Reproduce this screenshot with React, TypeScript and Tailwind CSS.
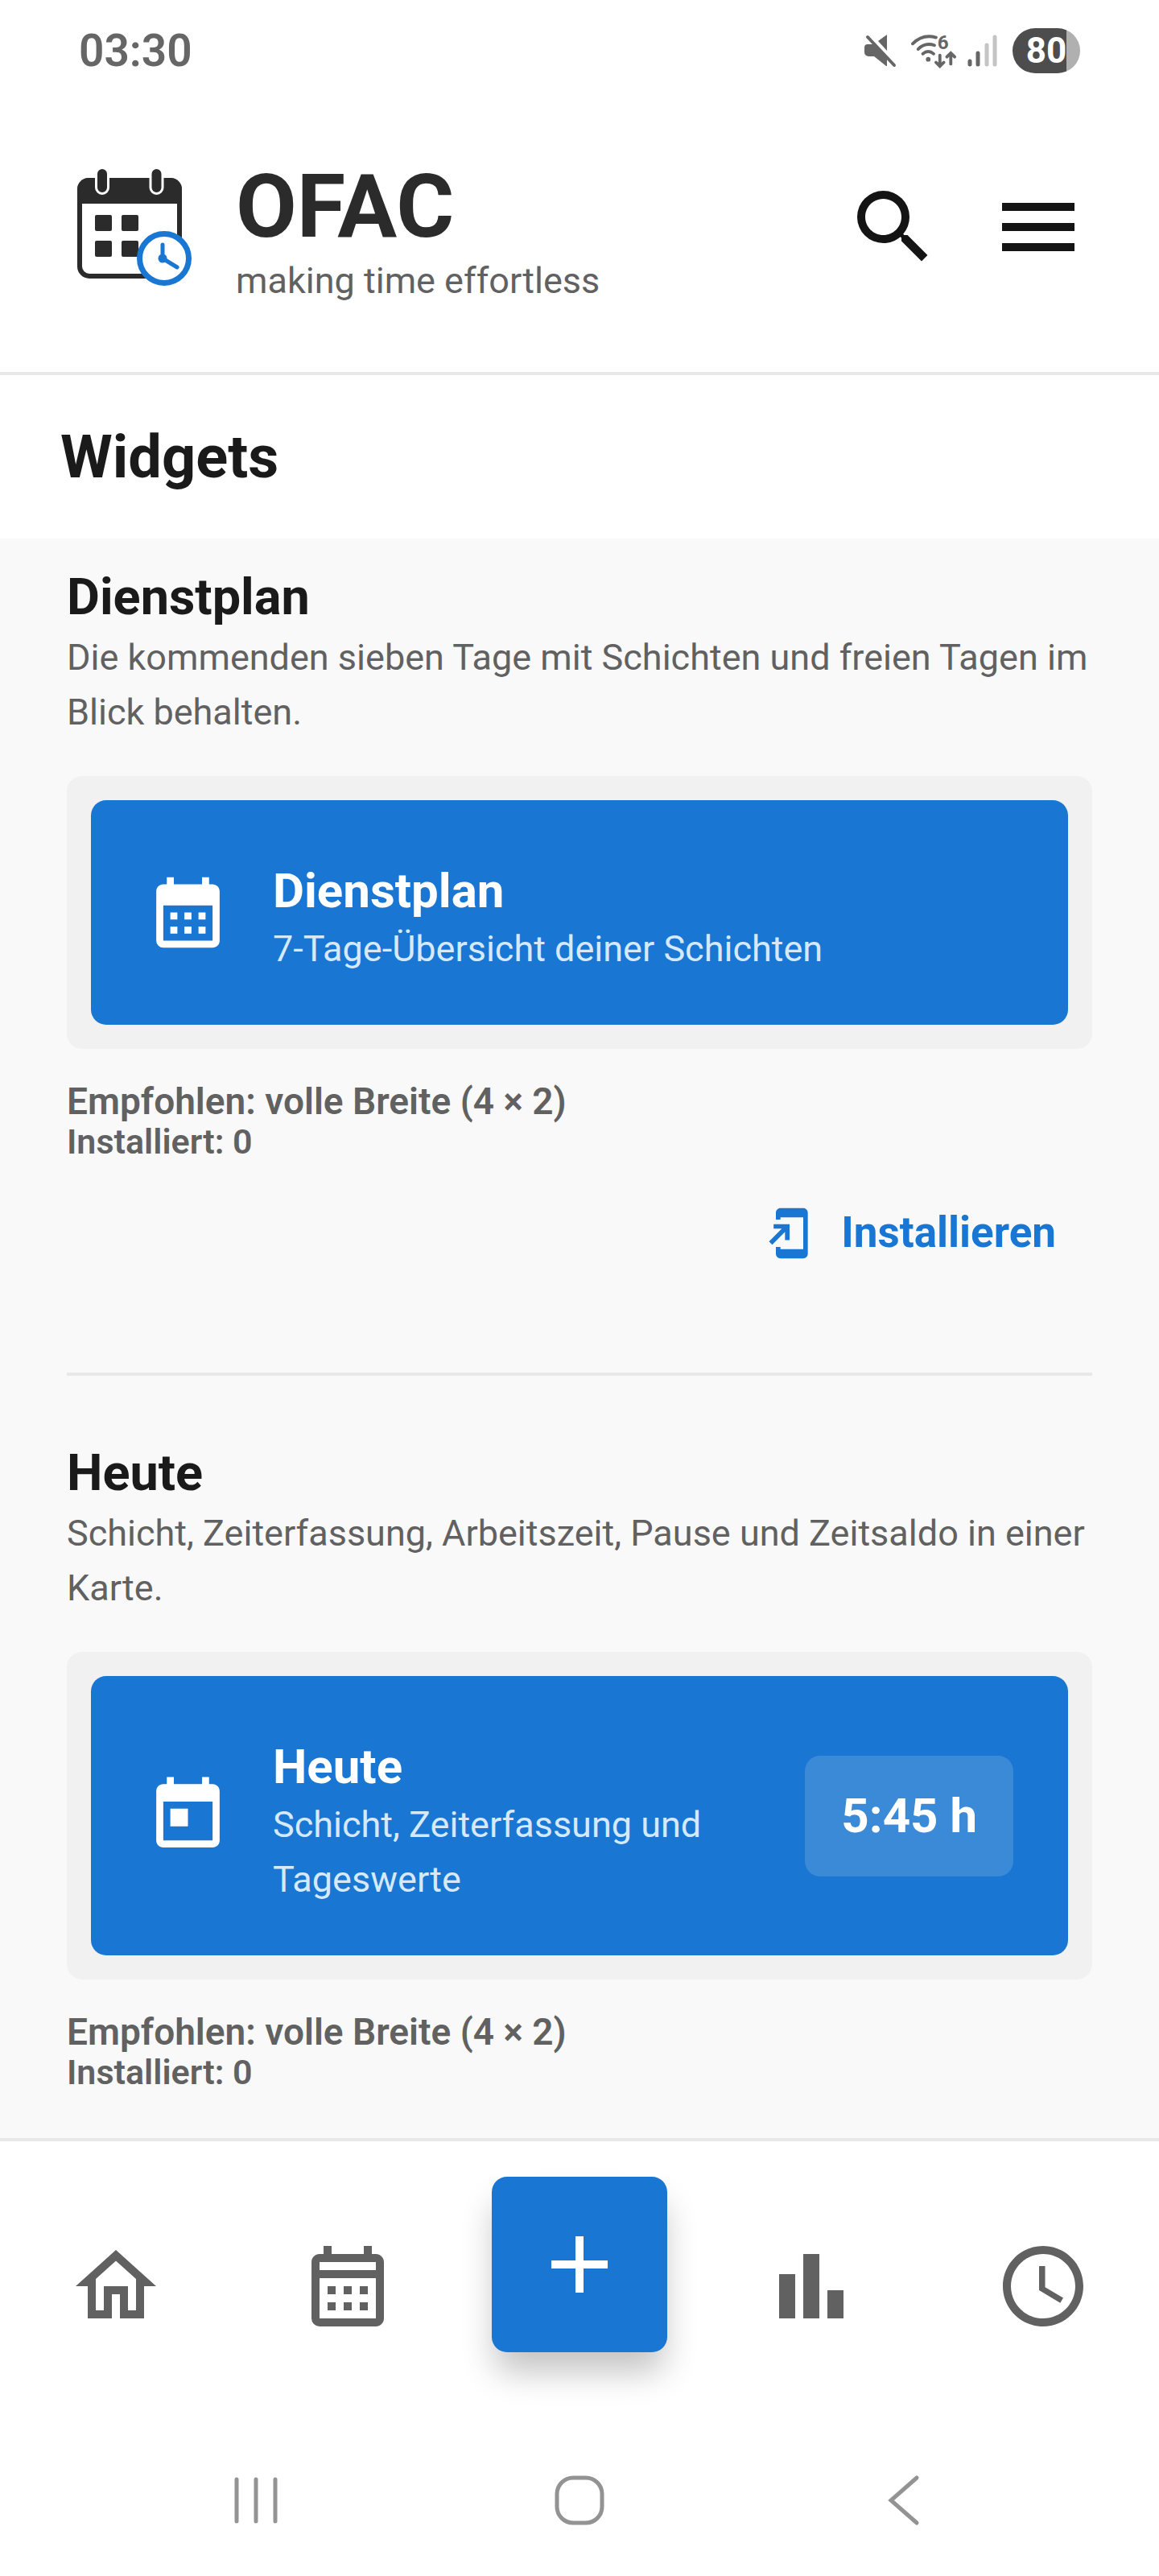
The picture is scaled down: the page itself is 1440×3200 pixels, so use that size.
import type { ReactNode } from "react";

const icons = {
  search:
    "M15.5 14h-.79l-.28-.27A6.471 6.471 0 0 0 16 9.5 6.5 6.5 0 1 0 9.5 16c1.61 0 3.09-.59 4.23-1.57l.27.28v.79l5 4.99L20.49 19l-4.99-5zm-6 0C7.01 14 5 11.99 5 9.5S7.01 5 9.5 5 14 7.01 14 9.5 11.99 14 9.5 14z",
  menu: "M3 18h18v-2H3v2zm0-5h18v-2H3v2zm0-7v2h18V6H3z",
  schedule:
    "M19 4h-1V2h-2v2H8V2H6v2H5c-1.11 0-1.99.9-1.99 2L3 20a2 2 0 0 0 2 2h14c1.1 0 2-.9 2-2V6c0-1.1-.9-2-2-2zm0 16H5V10h14v10zM9 14H7v-2h2v2zm4 0h-2v-2h2v2zm4 0h-2v-2h2v2zm-8 4H7v-2h2v2zm4 0h-2v-2h2v2zm4 0h-2v-2h2v2z",
  today:
    "M19 3h-1V1h-2v2H8V1H6v2H5c-1.11 0-1.99.9-1.99 2L3 19c0 1.1.89 2 2 2h14c1.1 0 2-.9 2-2V5c0-1.1-.9-2-2-2zm0 16H5V8h14v11zM7 10h5v5H7z",
  install:
    "M18 1.01L8 1c-1.1 0-2 .9-2 2v3h2V5h10v14H8v-1H6v3c0 1.1.9 2 2 2h10c1.1 0 2-.9 2-2V3c0-1.1-.9-1.99-2-1.99zM10 15h2V8H5v2h3.59L3 15.59 4.41 17 10 11.41z",
  home: "M12 5.69l5 4.5V18h-2v-6H9v6H7v-7.81l5-4.5M12 3L2 12h3v8h6v-6h2v6h6v-8h3L12 3z",
  calendar:
    "M19 4h-1V2h-2v2H8V2H6v2H5c-1.11 0-1.99.9-1.99 2L3 20a2 2 0 0 0 2 2h14c1.1 0 2-.9 2-2V6c0-1.1-.9-2-2-2zm0 16H5V10h14v10zm0-12H5V6h14v2zM9 14H7v-2h2v2zm4 0h-2v-2h2v2zm4 0h-2v-2h2v2zm-8 4H7v-2h2v2zm4 0h-2v-2h2v2zm4 0h-2v-2h2v2z",
  add: "M19 13h-6v6h-2v-6H5v-2h6V5h2v6h6v2z",
  chart: "M4 9h4v11H4zm12 4h4v7h-4zm-6-9h4v16h-4z",
  clock:
    "M11.99 2C6.47 2 2 6.48 2 12s4.47 10 9.99 10C17.52 22 22 17.52 22 12S17.52 2 11.99 2zM12 20c-4.42 0-8-3.58-8-8s3.58-8 8-8 8 3.58 8 8-3.58 8-8 8zm.5-13H11v6l5.25 3.15.75-1.23-4.5-2.67z",
};

type IconName = keyof typeof icons;

function Icon({ name, className }: { name: IconName; className: string }) {
  return (
    <svg viewBox="0 0 24 24" fill="currentColor" className={className} aria-hidden="true">
      <path d={icons[name]} />
    </svg>
  );
}

function Logo() {
  return (
    <svg viewBox="0 0 150 150" className="size-[150px] shrink-0" aria-hidden="true">
      <rect x="9" y="17" width="124" height="119" rx="12" fill="#fff" stroke="#2b2b2b" strokeWidth="6" />
      <path d="M6 46V28a14 14 0 0 1 14-14h102a14 14 0 0 1 14 14v18z" fill="#2b2b2b" />
      <g fill="#2b2b2b" stroke="#fff" strokeWidth="3">
        <rect x="29.5" y="1.5" width="15" height="32" rx="7.5" />
        <rect x="97" y="1.5" width="15" height="32" rx="7.5" />
      </g>
      <g fill="#2b2b2b">
        <rect x="28" y="60" width="21" height="20" rx="2" />
        <rect x="61" y="60" width="21" height="20" rx="2" />
        <rect x="28" y="92" width="21" height="20" rx="2" />
        <rect x="61" y="92" width="21" height="20" rx="2" />
      </g>
      <circle cx="114" cy="114" r="30.5" fill="#fff" stroke="#1976d2" strokeWidth="7" />
      <circle cx="112" cy="114" r="5.5" fill="#1976d2" />
      <path d="M112 97v17l18 11" fill="none" stroke="#1976d2" strokeWidth="5" strokeLinecap="round" />
    </svg>
  );
}

function StatusBar() {
  return (
    <div className="flex h-[102px] items-center justify-between bg-white px-[98px] pt-6 text-[#666]">
      <span className="text-[55px] leading-none font-semibold">03:30</span>
      <div className="flex items-center">
        <svg viewBox="0 0 40 42" className="mr-[18px] h-[42px] w-10" aria-hidden="true">
          <path d="M28 1v20L17 9z" fill="currentColor" />
          <path d="M4 13h8l16 17v10h-1L12 28H5a5 5 0 0 1-5-5v-6a4 4 0 0 1 4-4z" fill="currentColor" />
          <path d="M4 4l33 35" stroke="currentColor" strokeWidth="4" strokeLinecap="round" />
        </svg>
        <svg viewBox="0 -8 60 60" className="mr-3 size-[58px]" aria-hidden="true">
          <g fill="none" stroke="currentColor" strokeWidth="4" strokeLinecap="round">
            <path d="M2 13Q15 0 32 5" />
            <path d="M9 20q9-9 21-5" />
            <path d="M15 26q7-6 14 0" />
            <path d="M37 28v13M32 37l5 5 5-5M51 39V26M46 30l5-5 5 5" />
          </g>
          <circle cx="22" cy="33" r="3" fill="currentColor" />
          <text x="34" y="20" fontSize="25" fontWeight="700" fill="currentColor">
            6
          </text>
        </svg>
        <svg viewBox="0 0 38 40" className="mr-[18px] h-10 w-[38px]" aria-hidden="true">
          <g strokeWidth="5" strokeLinecap="round">
            <path d="M3 33v4M13 23v14" stroke="#666" />
            <path d="M24 13v24M34 3v34" stroke="#c4c4c4" />
          </g>
        </svg>
        <span className="flex h-14 w-[84px] items-center justify-center rounded-full bg-[linear-gradient(to_right,#4d4d4d_80%,#b0b0b0_80%)] text-[44px] leading-none font-bold text-white">
          80
        </span>
      </div>
    </div>
  );
}

function Header() {
  return (
    <header className="flex h-[364px] items-center justify-between border-b-4 border-[#e8e8e8] bg-white pr-[60px] pl-[90px]">
      <div className="flex items-center gap-[53px]">
        <Logo />
        <div>
          <div className="text-[110px] leading-[134px] font-bold text-[#2b2b2b]">OFAC</div>
          <div className="text-[45px] leading-[50px] text-[#616161]">making time effortless</div>
        </div>
      </div>
      <div className="flex text-[#141414]">
        <button type="button" aria-label="Suche" className="flex size-[180px] items-center justify-center">
          <Icon name="search" className="size-[120px]" />
        </button>
        <button type="button" aria-label="Menü" className="flex size-[180px] items-center justify-center">
          <Icon name="menu" className="size-[120px]" />
        </button>
      </div>
    </header>
  );
}

type WidgetProps = {
  title: string;
  description: string;
  subtitle: string;
  icon: IconName;
  value?: string;
  children?: ReactNode;
};

function Widget({ title, description, subtitle, icon, value, children }: WidgetProps) {
  return (
    <section>
      <h2 className="text-[63px] leading-[82px] font-bold text-[#1a1a1a]">{title}</h2>
      <p className="text-[45px] leading-[68px] text-[#616161]">{description}</p>
      <div className="mt-[45px] rounded-[19px] bg-[#f1f1f1] p-[30px]">
        <div className="flex items-center rounded-[19px] bg-[#1976d2] px-[68px] py-[60px] text-white">
          <Icon name={icon} className="mr-[53px] size-[105px] shrink-0" />
          <div className="flex-1 pt-[15px]">
            <h3 className="text-[60px] leading-[76px] font-bold">{title}</h3>
            <p className="text-[45px] leading-[68px] text-[#d6e9fb]">{subtitle}</p>
          </div>
          {value && (
            <span className="ml-[53px] rounded-[19px] bg-white/15 px-[45px] text-[60px] leading-[150px] font-bold">
              {value}
            </span>
          )}
        </div>
      </div>
      <div className="mt-[39px] font-semibold text-[#616161]">
        <p className="text-[46px] leading-[52px]">Empfohlen: volle Breite (4 × 2)</p>
        <p className="text-[43px] leading-[48px]">Installiert: 0</p>
      </div>
      {children}
    </section>
  );
}

const tabs: { name: IconName; label: string }[] = [
  { name: "home", label: "Start" },
  { name: "calendar", label: "Kalender" },
  { name: "add", label: "Neu" },
  { name: "chart", label: "Statistik" },
  { name: "clock", label: "Zeiten" },
];

function BottomNav() {
  return (
    <nav className="grid h-[364px] grid-cols-5 border-t-4 border-[#e8e8e8] bg-white text-[#616161]">
      {tabs.map(({ name, label }) =>
        name === "add" ? (
          <div key={name} className="flex items-center justify-center pb-[54px]">
            <button
              type="button"
              aria-label={label}
              className="flex size-[218px] items-center justify-center rounded-[19px] bg-[#1976d2] text-white shadow-[0_28px_42px_-4px_rgba(0,0,0,0.24)]"
            >
              <Icon name={name} className="size-[120px]" />
            </button>
          </div>
        ) : (
          <button key={name} type="button" aria-label={label} className="flex items-center justify-center">
            <Icon name={name} className="size-[120px]" />
          </button>
        ),
      )}
    </nav>
  );
}

function SystemNav() {
  return (
    <div className="grid h-[180px] grid-cols-3 bg-white px-[117px] pb-2 text-[#939393]">
      <button type="button" aria-label="Letzte Apps" className="flex items-center justify-center">
        <svg viewBox="0 0 64 64" className="size-16" fill="none" stroke="currentColor" strokeWidth="5" strokeLinecap="round">
          <path d="M8 6v52M32 6v52M56 6v52" />
        </svg>
      </button>
      <button type="button" aria-label="Startbildschirm" className="flex items-center justify-center">
        <svg viewBox="0 0 64 64" className="size-16" fill="none" stroke="currentColor" strokeWidth="5">
          <rect x="4" y="4" width="56" height="56" rx="20" />
        </svg>
      </button>
      <button type="button" aria-label="Zurück" className="flex items-center justify-center">
        <svg viewBox="0 0 64 64" className="size-16" fill="none" stroke="currentColor" strokeWidth="5" strokeLinecap="round">
          <path d="M49 4L17 32l32 28" />
        </svg>
      </button>
    </div>
  );
}

export default function App() {
  return (
    <div className="flex min-h-screen flex-col bg-white font-['Roboto',sans-serif]">
      <StatusBar />
      <Header />
      <h1 className="bg-white pt-[57px] pb-14 pl-[75px] text-[74px] leading-[90px] font-bold text-[#1a1a1a]">
        Widgets
      </h1>
      <main className="flex-1 bg-[#f9f9f9] px-[83px] pt-8 pb-[58px]">
        <Widget
          title="Dienstplan"
          description="Die kommenden sieben Tage mit Schichten und freien Tagen im Blick behalten."
          subtitle="7-Tage-Übersicht deiner Schichten"
          icon="schedule"
        >
          <div className="flex justify-end">
            <button
              type="button"
              className="flex h-[180px] items-center gap-[30px] px-[45px] text-[53px] font-bold text-[#1976d2]"
            >
              <Icon name="install" className="size-[68px]" />
              Installieren
            </button>
          </div>
        </Widget>
        <hr className="mt-[83px] mb-20 border-t-4 border-[#e8e8e8]" />
        <Widget
          title="Heute"
          description="Schicht, Zeiterfassung, Arbeitszeit, Pause und Zeitsaldo in einer Karte."
          subtitle="Schicht, Zeiterfassung und Tageswerte"
          icon="today"
          value="5:45 h"
        />
      </main>
      <BottomNav />
      <SystemNav />
    </div>
  );
}
